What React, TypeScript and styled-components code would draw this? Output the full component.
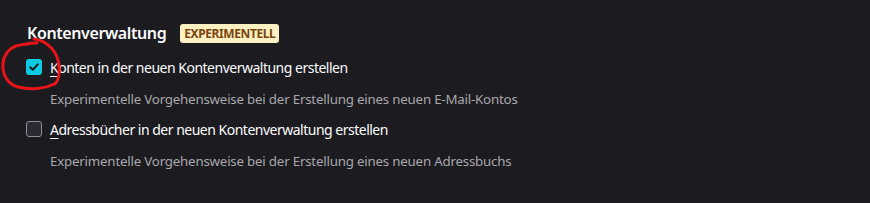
import React from "react";
import styled, { createGlobalStyle } from "styled-components";

const Global = createGlobalStyle`
  html, body { margin: 0; padding: 0; background: #1c1b1f; }
  body { font-family: "Noto Sans", "Open Sans", sans-serif; color: #fbfbfe; }
`;

const Page = styled.div`
  position: relative;
  width: 870px;
  height: 203px;
  box-sizing: border-box;
  padding: 21px 0 0 26px;
  background: #1c1b1f;
  overflow: hidden;
`;

const Header = styled.div`
  display: flex;
  align-items: center;
  gap: 14px;
  height: 24px;
  margin-left: 1px;
`;

const Title = styled.h2`
  margin: 0;
  font-size: 16px;
  font-weight: 600;
  color: #fbfbfe;
  letter-spacing: -0.4px;
`;

const Badge = styled.span`
  display: inline-flex;
  align-items: center;
  height: 19px;
  padding: 0 4px;
  border-radius: 3px;
  background: #fdf0c2;
  color: #7a4610;
  font-size: 12px;
  font-weight: 700;
  letter-spacing: -0.4px;
`;

const OptionRow = styled.label<{ $top: number }>`
  display: flex;
  align-items: center;
  gap: 8px;
  height: 22px;
  margin-top: ${(p) => p.$top}px;
  font-size: 14px;
  color: #fbfbfe;
  letter-spacing: -0.5px;
`;

const Box = styled.span<{ $checked?: boolean }>`
  display: inline-flex;
  align-items: center;
  justify-content: center;
  flex: none;
  width: 16px;
  height: 16px;
  box-sizing: border-box;
  border-radius: 3px;
  background: ${(p) => (p.$checked ? "#0bcbe3" : "#2b2a33")};
  border: ${(p) => (p.$checked ? "none" : "1px solid #8f8f9d")};
`;

const Key = styled.span`
  text-decoration: underline;
  text-underline-offset: 3px;
`;

const Desc = styled.div<{ $top: number }>`
  margin-top: ${(p) => p.$top}px;
  padding-left: 24px;
  height: 20px;
  line-height: 20px;
  font-size: 13.3px;
  color: #a8a8ae;
  letter-spacing: -0.2px;
`;

const Scribble = styled.svg`
  position: absolute;
  left: 0;
  top: 0;
  pointer-events: none;
`;

export default function App() {
  return (
    <>
      <Global />
      <Page>
        <Header>
          <Title>Kontenverwaltung</Title>
          <Badge>EXPERIMENTELL</Badge>
        </Header>
        <OptionRow $top={11}>
          <Box $checked>
            <svg width="12" height="12" viewBox="0 0 12 12">
              <path d="M2.2 6.2 L4.8 8.7 L9.8 3.4" fill="none" stroke="#1c1b22" strokeWidth="2" strokeLinecap="round" strokeLinejoin="round" />
            </svg>
          </Box>
          <span>
            <Key>K</Key>onten in der neuen Kontenverwaltung erstellen
          </span>
        </OptionRow>
        <Desc $top={11}>Experimentelle Vorgehensweise bei der Erstellung eines neuen E-Mail-Kontos</Desc>
        <OptionRow $top={9}>
          <Box />
          <span>
            <Key>A</Key>dressbücher in der neuen Kontenverwaltung erstellen
          </span>
        </OptionRow>
        <Desc $top={11}>Experimentelle Vorgehensweise bei der Erstellung eines neuen Adressbuchs</Desc>
        <Scribble width="70" height="100" viewBox="0 0 70 100">
          <path
            d="M27 44 C30 43 34 43 37 43 M34 39 C48 41 58 52 59 66 C60 76 58 81 55 84 M54 84 C44 89 30 90 18 87 C7 84 2 74 3 63 C4 54 10 48 16 46 C20 45 24 44 28 44"
            fill="none"
            stroke="#e8141a"
            strokeWidth="3"
            strokeLinecap="round"
            strokeLinejoin="round"
          />
        </Scribble>
      </Page>
    </>
  );
}
